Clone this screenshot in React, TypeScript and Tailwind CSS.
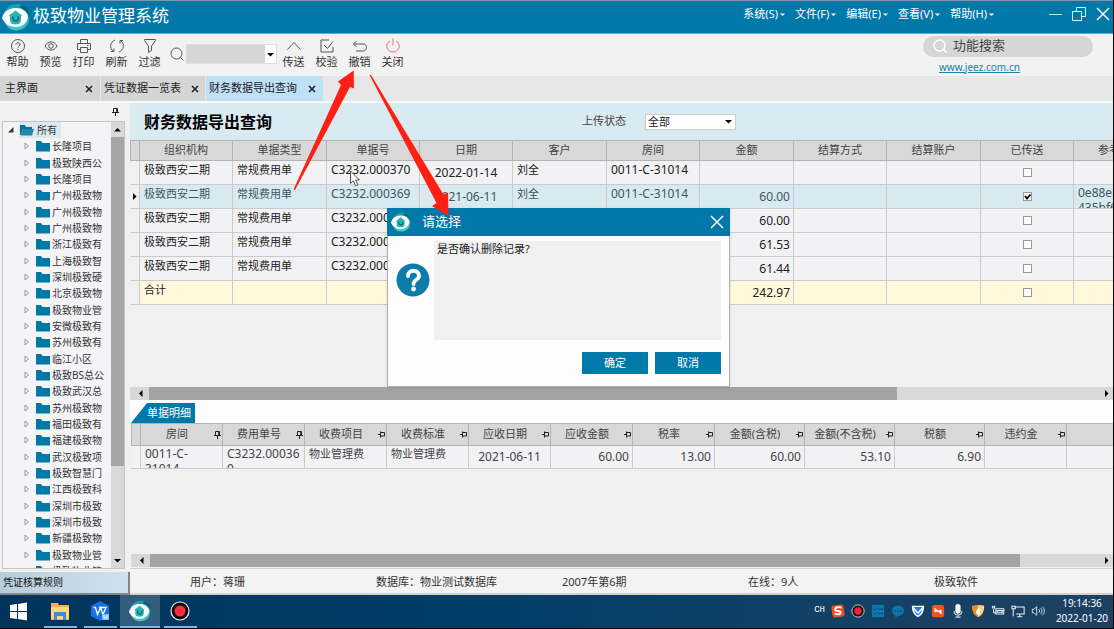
import React from "react";

type IconProps = { className?: string };

function LogoArt() {
  return (
    <>
      <path d="M2 12C3 3 12-1 20 2c6 3 9 10 7 16-1 5-5 8-9 9 4-3 6-7 5-12C21 8 9 4 2 12z" fill="#14a3b0" />
      <path d="M27 17c-2 8-11 13-19 9-3-2-5-5-6-9 5 5 10 7 16 6 4-1 7-3 9-6z" fill="#3cc9bf" />
      <path d="M20 2c5 2 8 7 7.500 13C26 9 23 6 17 4z" fill="#075b7c" />
      <path d="M0 15C2 7 9 5 14 5c6 0 10 3 12 8 0 7-6 11-12 11C7 24 2 20 0 15z" fill="#fff" />
      <path d="M13.500 7.500l6.500 5-1 1V17c0 3-2 4.500-5.500 4.500S8 20 8 17v-3.500l-1-1z" fill="#2bb5b0" />
      <path d="M11 14v1c0 4 5.500 4 5.500 0v-1" fill="none" stroke="#0a6f93" strokeWidth="1.600" strokeLinecap="round" />
    </>
  );
}

function Logo({ className }: IconProps) {
  return (
    <svg viewBox="0 0 28 28" className={className} aria-hidden="true">
      <LogoArt />
    </svg>
  );
}

function Folder({ open = false }: { open?: boolean }) {
  return (
    <svg viewBox="0 0 14 12" className="h-3 w-[14px] shrink-0" aria-hidden="true">
      {open ? (
        <>
          <path d="M0 1h5l1 2h6v2H3L1 11H0z" fill="#0a6f9c" />
          <path d="M3 5h11l-2 6.500H1z" fill="#2587ad" />
        </>
      ) : (
        <path d="M0 1h5l1.500 2H14v8.500H0z" fill="#0078a8" />
      )}
    </svg>
  );
}

function Pin({ side = false }: { side?: boolean }) {
  return (
    <svg viewBox="0 0 9 9" className="size-[9px] shrink-0" fill="none" stroke="#222" aria-hidden="true">
      {side ? (
        <path d="M1 4.500h2M3.500 1.500v6M3.500 2.500h4v3.500M3.500 6h4" />
      ) : (
        <path d="M2.500 5V1.500h4V5M5.700 1.500V5M1 5.500h7M4.500 5.500V9" />
      )}
    </svg>
  );
}

function Caret({ dir, className = "" }: { dir: "up" | "down" | "left" | "right"; className?: string }) {
  const d = {
    up: "M0 5.500L3.500 2 7 5.500z",
    down: "M0 2h7L3.500 5.500z",
    left: "M5.500 0v7L2 3.500z",
    right: "M2 0v7l3.500-3.500z",
  }[dir];
  return (
    <svg viewBox="0 0 7 7" className={`size-[7px] shrink-0 ${className}`} aria-hidden="true">
      <path d={d} fill="currentColor" />
    </svg>
  );
}

function Cross({ className }: IconProps) {
  return (
    <svg viewBox="0 0 14 14" className={className} fill="none" stroke="currentColor" strokeWidth="1.500" aria-hidden="true">
      <path d="M1 1l12 12M13 1L1 13" />
    </svg>
  );
}

function ToolIcon({ children, className = "" }: { children: React.ReactNode; className?: string }) {
  return (
    <svg viewBox="0 0 16 16" className={`size-4 ${className}`} fill="none" stroke="currentColor" aria-hidden="true">
      {children}
    </svg>
  );
}

const leftTools = [
  { label: "帮助", icon: <><circle cx="8" cy="8" r="6.500" /><path d="M6 6.500C6 4 10 4 10 6.300 10 8 8 7.800 8 9.500M8 10.800v1.200" /></> },
  { label: "预览", icon: <><path d="M2 8c3-5.500 9-5.500 12 0-3 5.500-9 5.500-12 0z" /><circle cx="8" cy="8" r="2.300" /></> },
  { label: "打印", icon: <><path d="M4.500 5V1.500h7V5M4 11.500H1.500V5.500h13v6H12M4.500 9.500h7v5h-7zM11 7.500h1.500" /></> },
  { label: "刷新", icon: <><path d="M6 2C1 4 0 10 4.500 13.500M2 13.500h3v-3M10 14c5-2 6-8 1.500-11.500M14 2.500h-3v3" /></> },
  { label: "过滤", icon: <path d="M2.500 1.500h11v1L9.500 8v4.500l-3 2V8l-4-5.500z" /> },
];

const rightTools = [
  { label: "传送", icon: <path d="M1.500 11.500L8 4.500l6.500 7" /> },
  { label: "校验", icon: <path d="M10 2H2v12h12V9M5 7l3.500 3.500L14 3.500" /> },
  { label: "撤销", icon: <path d="M4.500 3L1.500 6l3 3M1.500 6h10c4 0 4 7 0 7H4" /> },
  { label: "关闭", icon: <path d="M5 3C-1 6.500 2 14 8 14s9-7.500 3-11M8 .5v7" />, red: true },
];

function ToolButton({ label, icon, red = false }: { label: string; icon: React.ReactNode; red?: boolean }) {
  return (
    <button className="flex w-[33px] flex-col items-center text-[11px] leading-4 whitespace-nowrap text-[#333]">
      <ToolIcon className={red ? "text-[#ec6f74]" : "text-[#555]"}>{icon}</ToolIcon>
      <span>{label}</span>
    </button>
  );
}

const menus = ["系统(S)", "文件(F)", "编辑(E)", "查看(V)", "帮助(H)"];

const tree = [
  "长隆项目", "极致陕西公", "长隆项目", "广州极致物", "广州极致物", "广州极致物", "浙江极致有",
  "上海极致智", "深圳极致硬", "北京极致物", "极致物业管", "安微极致有", "苏州极致有", "临江小区",
  "极致BS总公", "极致武汉总", "苏州极致物", "福田极致有", "福建极致物", "武汉极致项", "极致智慧门",
  "江西极致科", "深圳市极致", "深圳市极致", "新疆极致物", "极致物业管", "极致物业管",
];

type Row = {
  org: string;
  type?: string;
  no?: string;
  date?: string;
  client?: string;
  room?: string;
  amount?: string;
  sent?: boolean;
  ref?: string;
};

const rows: Row[] = [
  { org: "极致西安二期", type: "常规费用单", no: "C3232.000370", date: "2022-01-14", client: "刘全", room: "0011-C-31014" },
  { org: "极致西安二期", type: "常规费用单", no: "C3232.000369", date: "2021-06-11", client: "刘全", room: "0011-C-31014", amount: "60.00", sent: true, ref: "0e88e8 435bf6" },
  { org: "极致西安二期", type: "常规费用单", no: "C3232.000", amount: "60.00" },
  { org: "极致西安二期", type: "常规费用单", no: "C3232.000", amount: "61.53" },
  { org: "极致西安二期", type: "常规费用单", no: "C3232.000", amount: "61.44" },
  { org: "合计", amount: "242.97" },
];

const columns = [
  { label: "组织机构", width: "w-[93px]" },
  { label: "单据类型", width: "w-[94px]" },
  { label: "单据号", width: "w-[93px]" },
  { label: "日期", width: "w-[93px]" },
  { label: "客户", width: "w-[94px]" },
  { label: "房间", width: "w-[93px]" },
  { label: "金额", width: "w-[94px]" },
  { label: "结算方式", width: "w-[93px]" },
  { label: "结算账户", width: "w-[94px]" },
  { label: "已传送", width: "w-[93px]" },
];

function Cell({ children, kind = "text" }: { children?: React.ReactNode; kind?: "text" | "code" | "date" | "num" | "box" }) {
  const inner = {
    text: "pt-px px-1 text-[11px] leading-4",
    code: "pt-px px-1 text-xs leading-4",
    date: "text-center text-xs leading-6",
    num: "px-[3px] text-right text-xs leading-6",
    box: "flex items-center justify-center",
  }[kind];
  return (
    <td className="border-r border-b border-[#cbcbcb] p-0">
      <div className={`h-[23px] overflow-hidden ${inner}`}>{children}</div>
    </td>
  );
}

function MainGrid() {
  return (
    <table className="w-[1037px] table-fixed border-separate border-spacing-0">
      <thead>
        <tr className="h-[21px] bg-[#d8d8d8] text-[11px] text-[#444]">
          <th aria-label="标记" className="w-[10px] border border-[#b4b4b4] p-0" />
          {columns.map((c) => (
            <th key={c.label} className={`border-y border-r border-[#b4b4b4] p-0 font-normal ${c.width}`}>{c.label}</th>
          ))}
          <th className="w-[93px] border-y border-[#b4b4b4] p-0 pl-[24px] text-left font-normal">参考</th>
        </tr>
      </thead>
      <tbody>
        {rows.map((r, i) => {
          const tone = r.sent ? "bg-[#d8eaf0] text-[#3f5560]" : i === 5 ? "bg-[#fff8da] text-[#222]" : "bg-[#f2f2f5] text-[#222]";
          return (
            <tr key={i} className={tone}>
              <td className="border-r border-b border-[#cbcbcb] bg-[#f0f0f0] p-0 text-black">
                {r.sent && <Caret dir="right" className="mx-auto" />}
              </td>
              <Cell>{r.org}</Cell>
              <Cell>{r.type}</Cell>
              <Cell kind="code">{r.no}</Cell>
              <Cell kind="date">{r.date}</Cell>
              <Cell>{r.client}</Cell>
              <Cell kind="code">{r.room}</Cell>
              <Cell kind="num">{r.amount}</Cell>
              <Cell />
              <Cell />
              <Cell kind="box">
                <label className="relative flex">
                  <input
                    type="checkbox"
                    aria-label="已传送"
                    defaultChecked={!!r.sent}
                    className="peer size-[9px] appearance-none border border-[#999] bg-white"
                  />
                  <svg viewBox="0 0 9 9" className="pointer-events-none absolute inset-0 hidden size-[9px] peer-checked:block" aria-hidden="true">
                    <path d="M2 4l2 2.500L7.500 2.500" fill="none" stroke="#000" strokeWidth="1.800" />
                  </svg>
                </label>
              </Cell>
              <td className="border-b border-[#cbcbcb] p-0">
                <div className="h-[23px] w-12 overflow-hidden px-1 text-xs leading-[15px]">{r.ref}</div>
              </td>
            </tr>
          );
        })}
      </tbody>
    </table>
  );
}

type Detail = { label: string; width: string; value?: string; align: "wrap" | "text" | "date" | "num"; up?: boolean };

const details: Detail[] = [
  { label: "房间", width: "w-[82px]", value: "0011-C-31014", align: "wrap", up: true },
  { label: "费用单号", width: "w-[82px]", value: "C3232.000369", align: "wrap", up: true },
  { label: "收费项目", width: "w-[82px]", value: "物业管理费", align: "text" },
  { label: "收费标准", width: "w-[82px]", value: "物业管理费", align: "text" },
  { label: "应收日期", width: "w-[82px]", value: "2021-06-11", align: "date" },
  { label: "应收金额", width: "w-[82px]", value: "60.00", align: "num" },
  { label: "税率", width: "w-[82px]", value: "13.00", align: "num" },
  { label: "金额(含税)", width: "w-[90px]", value: "60.00", align: "num" },
  { label: "金额(不含税)", width: "w-[90px]", value: "53.10", align: "num" },
  { label: "税额", width: "w-[90px]", value: "6.90", align: "num" },
  { label: "违约金", width: "w-[82px]", align: "text" },
];

const detailAlign = {
  wrap: "px-1 text-xs leading-[15px] wrap-anywhere",
  text: "px-1 text-[11px] leading-[15px]",
  date: "text-center text-xs leading-[22px]",
  num: "px-[3px] text-right text-xs leading-[22px]",
};

function DetailGrid() {
  return (
    <table className="w-[996px] table-fixed border-separate border-spacing-0 text-[#444]">
      <thead>
        <tr className="h-[23px] bg-[#d8d8d8] text-[11px]">
          <th aria-label="标记" className="w-[10px] border border-[#b4b4b4] p-0" />
          {details.map((d) => (
            <th key={d.label} className={`border-y border-r border-[#b4b4b4] p-0 font-normal ${d.width}`}>
              <div className="flex items-center">
                <span className="flex-1 whitespace-nowrap">{d.label}</span>
                <Pin side={!d.up} />
              </div>
            </th>
          ))}
          <th aria-label="空列" className="border-y border-[#b4b4b4] p-0" />
        </tr>
      </thead>
      <tbody>
        <tr className="bg-[#f2f2f5]">
          <td className="border-r border-b border-[#cbcbcb] p-0" />
          {details.map((d) => (
            <td key={d.label} className="border-r border-b border-[#cbcbcb] p-0">
              <div className={`h-[22px] overflow-hidden ${detailAlign[d.align]}`}>{d.value}</div>
            </td>
          ))}
          <td className="border-b border-[#cbcbcb] p-0" />
        </tr>
      </tbody>
    </table>
  );
}

function HScroll({ thumb }: { thumb: string }) {
  return (
    <div className="flex h-[13px] shrink-0 items-center bg-[#d8d8d8] pr-[3px] pl-[7px]">
      <Caret dir="left" />
      <div className="mr-[7px] ml-[5px] flex h-full flex-1">
        <div className={`h-full bg-[#a3a3a3] ${thumb}`} />
      </div>
      <Caret dir="right" />
    </div>
  );
}

function Sidebar() {
  return (
    <aside className="flex w-[130px] shrink-0 flex-col bg-[#f0f0f0]">
      <div className="flex h-[18px] shrink-0 items-center justify-end pr-[10px] pb-px">
        <Pin />
      </div>
      <div className="mr-[5px] ml-[2px] flex min-h-0 flex-1 border border-[#c4c4c4] bg-[#f4f4f7]">
        <ul className="min-w-0 flex-1 overflow-hidden text-[10px] leading-4 text-[#333]">
          <li className="flex h-4 items-center gap-[5px] pl-[5px]">
            <svg viewBox="0 0 6 6" className="size-[6px]" aria-hidden="true"><path d="M5.500 0v5.500H0z" fill="#333" /></svg>
            <span className="flex h-full items-center gap-[3px] bg-[#d8eaf0] pr-1 pl-px">
              <Folder open />
              所有
            </span>
          </li>
          {tree.map((name, i) => (
            <li key={i} className="flex h-4 items-center gap-[2px] pl-[21px] whitespace-nowrap nth-[3n]:h-[17px]">
              <svg viewBox="0 0 6 8" className="mr-1 h-2 w-[6px] shrink-0" fill="none" stroke="#999" aria-hidden="true">
                <path d="M1 1l3.500 3L1 7z" />
              </svg>
              <Folder />
              {name}
            </li>
          ))}
        </ul>
        <div className="flex w-[13px] shrink-0 flex-col items-center bg-[#d9d9d9]">
          <div className="flex h-[15px] w-full items-center justify-center"><Caret dir="up" /></div>
          <div className="flex w-full flex-1 flex-col">
            <div className="h-[79%] bg-[#a6a6a6]" />
          </div>
          <div className="flex h-[15px] w-full items-center justify-center"><Caret dir="down" /></div>
        </div>
      </div>
      <button className="mt-[3px] h-[23px] shrink-0 border-r-2 border-b-2 border-[#858585] bg-linear-to-r from-[#b7cddb] to-[#cfe1ec] pl-[3px] text-left text-[10px] text-[#111]">
        凭证核算规则
      </button>
    </aside>
  );
}

function Dialog() {
  return (
    <div role="dialog" aria-label="请选择" className="absolute top-[208px] left-[387px] flex w-[343px] flex-col border border-[#b0b0b0] bg-[#fdfdfd] shadow-sm">
      <div className="-mx-px -mt-px flex h-7 items-center bg-[#0078a8] pr-[6px] pl-1 text-white">
        <Logo className="size-5" />
        <h2 className="ml-[11px] flex-1 text-[13px]">请选择</h2>
        <button aria-label="关闭对话框"><Cross className="size-[14px]" /></button>
      </div>
      <div className="flex h-[104px] pt-[5px] pr-2 pl-2">
        <svg viewBox="0 0 34 34" className="mt-[22px] size-[34px] shrink-0" aria-hidden="true">
          <circle cx="17" cy="17" r="16.500" fill="#0d7caa" />
          <path d="M12 13c0-7 11-7 11 0 0 4-5.500 3.500-5.500 8" fill="none" stroke="#fff" strokeWidth="3.800" strokeLinecap="round" />
          <circle cx="17.500" cy="26" r="2.400" fill="#fff" />
        </svg>
        <p className="ml-1 flex-1 bg-[#f0f0f0] px-[3px] text-[11px] leading-4 text-[#222]">是否确认删除记录?</p>
      </div>
      <div className="flex justify-end gap-[7px] pt-3 pr-2 pb-3 text-[11px] text-white">
        <button className="h-[22px] w-[66px] bg-[#0078a8]">确定</button>
        <button className="h-[22px] w-[66px] bg-[#0078a8]">取消</button>
      </div>
    </div>
  );
}

function Annotations() {
  return (
    <svg viewBox="285 64 175 158" className="pointer-events-none absolute top-16 left-[285px] h-[158px] w-[175px]" aria-hidden="true">
      <path d="M293.500 189.500L341 85 338 81.500 353.700 70.500 354 88.500 350 87 295 190z" fill="#fe2014" />
      <path d="M369.500 75L436.500 203 432 206 448.500 216 448 192.500 443.500 194.500 371 75z" fill="#fe2014" />
      <path d="M350.500 171v12.500l2.800-2.600 2.400 5 2.200-1-2.300-4.900h3.900z" fill="#f6f6f6" stroke="#444" strokeWidth=".9" />
    </svg>
  );
}

function TaskButton({ label, children, active = false, running = true }: { label: string; children: React.ReactNode; active?: boolean; running?: boolean }) {
  return (
    <button
      aria-label={label}
      className={`flex w-10 flex-col items-center justify-between pt-[5px] ${active ? "bg-[#325d7c]" : ""}`}
    >
      <svg viewBox="0 0 22 22" className="size-[22px]" aria-hidden="true">{children}</svg>
      <span className={`h-[2px] ${active ? "w-full" : "w-[33px]"} ${running ? "bg-[#76b9ed]" : ""}`} />
    </button>
  );
}

const tray: { label: string; art: React.ReactNode }[] = [
  { label: "搜狗输入法", art: <><rect x="1" y="1" width="14" height="14" rx="3" fill="#f04a23" transform="rotate(-8 8 8)" /><path d="M12 4C7 3 4 4 5 7c1 2 6 0 6 3 0 2-3 2-7 1" fill="none" stroke="#fff" strokeWidth="2.200" /></> },
  { label: "录屏", art: <><circle cx="8" cy="8" r="7" fill="#111" stroke="#ddd" /><circle cx="8" cy="8" r="4.200" fill="#f3233a" /></> },
  { label: "任务", art: <><rect x="1" y="1" width="14" height="14" fill="#0c76ae" /><path d="M3 6l1 1 2-2M8 6h6M3 11l1 1 2-2M8 11h6" fill="none" stroke="#0b3d63" /></> },
  { label: "消息", art: <><path d="M8 2c9 0 9 11 1 11l-4 2v-2C-1 11 0 2 8 2z" fill="#0c76ae" /><path d="M4 8h1.500M7.300 8h1.500M10.500 8H12" stroke="#0b3d63" strokeWidth="1.500" /></> },
  { label: "电脑管家", art: <><path d="M1 2h14c0 6-2 11-7 13C3 13 1 8 1 2z" fill="#fff" /><path d="M3 3.500h10L8 9zM3 6.500l5 5 5-5c-1 3-2.500 5.500-5 6.500-2.500-1-4-3.500-5-6.500z" fill="#1f7fe0" /></> },
  { label: "远程协助", art: <><rect x="1" y="1" width="14" height="14" rx="2.500" fill="#f4511e" /><path d="M4 4l4 3.500 4-1V12L8 8.500 4 9.500z" fill="#fff" /></> },
  { label: "麦克风", art: <><rect x="5" y="0" width="6" height="11" rx="3" fill="#f4f4f4" /><path d="M3.500 8c0 6 9 6 9 0M8 12.500V15M5 15h6" fill="none" stroke="#ddd" strokeWidth="1.200" /></> },
  { label: "安全防护", art: <><path d="M1 2l7-1 7 1c0 6-2 11-7 13C3 13 1 8 1 2z" fill="#f58a1f" /><path d="M8 1l7 1c0 6-2 11-7 13z" fill="#ffd28a" /><path d="M9 4c-5 5-3 8-1 8 3 0 3-3 1-8z" fill="#fff" /></> },
  { label: "电源", art: <path d="M5.500 5.500h9v6h-9zM14.500 7.500h1M1 3.500h4M2 2v3M4 2v3M3 5v5h2M7 7.500h6v2H7z" fill="none" stroke="#e8eef3" strokeWidth="1.200" /> },
  { label: "网络", art: <path d="M4 3.500h11v8H6M10 11.500v3M7 14.500h6M1 2.500h4v3H1zM2.500 6v8" fill="none" stroke="#e8eef3" strokeWidth="1.200" /> },
  { label: "音量", art: <path d="M1.500 6h2l3-3v10l-3-3h-2zM9 6c1 1 1 3 0 4M11 4.500c2 2 2 5 0 7M13 3c3 3 3 7 0 10" fill="none" stroke="#e8eef3" /> },
];

function Taskbar() {
  return (
    <footer className="flex h-[34px] shrink-0 border-b border-black bg-linear-to-r from-[#00345a] via-[#003f69] via-45% to-[#1d4162] text-white">
      <TaskButton label="开始" running={false}>
        <path d="M1 5l7-1v7H1zM9 4l9-1.500V11H9zM1 12h7v7l-7-1zM9 12h9v8.500L9 19z" fill="#fff" />
      </TaskButton>
      <TaskButton label="文件资源管理器">
        <path d="M2 3h7l1 2h10v15H2z" fill="#f0b43c" />
        <path d="M2 7h18v12H2z" fill="#ffd777" />
        <path d="M5 20v-8h12v8h-3v-4H8v4z" fill="#3494d3" />
      </TaskButton>
      <TaskButton label="WPS">
        <path d="M11 1l9 5v10l-9 5-9-5V6z" fill="#1674de" />
        <path d="M4.500 7.500h2l2 7 3-7 2.500 7 3-7H10" fill="none" stroke="#fff" strokeWidth="1.300" />
        <path d="M13 14h7v6h-7z" fill="#7db7fb" />
        <path d="M15 15v3h3v-3" fill="none" stroke="#fff" />
      </TaskButton>
      <TaskButton label="极致物业管理系统" active>
        <g transform="scale(.78)"><LogoArt /></g>
      </TaskButton>
      <TaskButton label="录屏软件">
        <circle cx="11" cy="11" r="9" fill="#0a0a0a" stroke="#eee" strokeWidth="1.200" />
        <circle cx="11" cy="11" r="5.500" fill="#fb2a3d" />
      </TaskButton>
      <div className="ml-auto flex items-center gap-[6px] pb-[2px]">
        <span className="font-['Liberation_Mono',monospace] text-[9px]">CH</span>
        <ul className="flex items-center gap-[6px]">
          {tray.map((t) => (
            <li key={t.label}>
              <svg viewBox="0 0 16 16" role="img" aria-label={t.label} className="size-[14px]">{t.art}</svg>
            </li>
          ))}
        </ul>
        <time className="flex w-[62px] flex-col items-center text-[10px] leading-[15px]">
          <span>19:14:36</span>
          <span>2022-01-20</span>
        </time>
      </div>
    </footer>
  );
}

const tabs = [
  { label: "主界面", box: "w-[100px] bg-[#d5d5d5] pr-[7px] pl-[5px]" },
  { label: "凭证数据一览表", box: "w-[104px] bg-[#d5d5d5] pr-[6px] pl-[3px]" },
  { label: "财务数据导出查询", box: "w-[117px] bg-[#c0e0f8] pr-[7px] pl-[3px]" },
];

const status = ["用户：蒋珊", "数据库：物业测试数据库", "2007年第6期", "在线：9人", "极致软件"];

export default function App() {
  return (
    <div className="relative flex h-screen flex-col overflow-hidden border-r border-black bg-[#f0f0f0] font-['Noto_Sans','Noto_Sans_CJK_SC',sans-serif] text-[11px]">
      <header className="flex h-[34px] shrink-0 items-center border-t border-b border-t-[#7c9aa8] border-b-[#5fb0d0] bg-[#0078a8] pl-[2px] text-white">
        <Logo className="size-7" />
        <h1 className="mb-[2px] ml-[3px] flex-1 text-[17px] leading-6">极致物业管理系统</h1>
        <nav className="mb-[6px] flex gap-[9px]">
          {menus.map((m) => (
            <button key={m} className="flex items-center gap-px whitespace-nowrap">
              {m}
              <Caret dir="down" className="scale-75" />
            </button>
          ))}
        </nav>
        <div className="mb-[6px] ml-[54px] flex items-center gap-[10px] pr-[3px]">
          <button aria-label="最小化" className="h-px w-[13px] bg-[#cfe6ef]" />
          <button aria-label="还原">
            <svg viewBox="0 0 14 14" className="size-[14px]" fill="none" stroke="#e3f1f6" aria-hidden="true">
              <path d="M.5 4.500h9v9h-9zM4.500 4V.5h9v9H10" />
            </svg>
          </button>
          <button aria-label="关闭窗口"><Cross className="size-[14px]" /></button>
        </div>
      </header>

      <div className="flex h-[42px] shrink-0 items-center bg-[#f2f2f2] pb-[2px] pl-px">
        {leftTools.map((t) => <ToolButton key={t.label} {...t} />)}
        <svg viewBox="0 0 14 14" className="ml-1 size-[14px] shrink-0" fill="none" stroke="#555" aria-hidden="true">
          <circle cx="6.500" cy="6.500" r="5.500" /><path d="M10.500 10.500l3 3" />
        </svg>
        <label className="relative ml-[2px] flex h-5 w-[91px] border border-[#dedede] bg-white">
          <input aria-label="快速查找" className="h-full w-[78px] bg-[#d6d6d6] px-1 outline-none" />
          <Caret dir="down" className="m-auto" />
        </label>
        {rightTools.map((t) => <ToolButton key={t.label} {...t} />)}
        <div className="mr-5 ml-auto flex w-[170px] flex-col gap-[2px] pt-[2px]">
          <label className="flex h-[21px] items-center gap-[6px] rounded-full bg-[#d6d6d6] pl-[10px]">
            <svg viewBox="0 0 14 14" className="size-[14px] shrink-0" fill="none" stroke="#fff" strokeWidth="1.400" aria-hidden="true">
              <circle cx="6.500" cy="6.500" r="5.500" /><path d="M10.500 10.500l3 3" />
            </svg>
            <input aria-label="功能搜索" placeholder="功能搜索" className="w-full bg-transparent text-[13px] outline-none placeholder:text-[#444]" />
          </label>
          <a href="http://www.jeez.com.cn" className="pl-4 text-[10px] leading-4 text-[#167fab] underline">www.jeez.com.cn</a>
        </div>
      </div>

      <div className="flex h-[25px] shrink-0 gap-px bg-[#e7e7e7]">
        {tabs.map((t) => (
          <div key={t.label} className={`flex items-center justify-between whitespace-nowrap text-[#222] ${t.box}`}>
            <button>{t.label}</button>
            <button aria-label={`关闭${t.label}`}>
              <svg viewBox="0 0 8 8" className="size-2" stroke="#222" strokeWidth="1.600" aria-hidden="true"><path d="M1 1l6 6M7 1L1 7" /></svg>
            </button>
          </div>
        ))}
      </div>

      <div className="flex min-h-0 flex-1 border-t-2 border-[#fafafa]">
        <Sidebar />
        <main className="flex min-w-0 flex-1 flex-col">
          <div className="flex h-[37px] shrink-0 items-center bg-[#d9eaf1] pl-[14px]">
            <h2 className="w-[438px] text-base font-bold text-black">财务数据导出查询</h2>
            <label htmlFor="upload-state" className="w-[63px] text-[#444]">上传状态</label>
            <span className="relative flex w-[91px] items-center">
              <select id="upload-state" className="h-4 w-full appearance-none border border-[#ccc] bg-white px-[2px] text-[11px] leading-[14px] text-[#222]">
                <option>全部</option>
              </select>
              <Caret dir="down" className="pointer-events-none absolute right-1" />
            </span>
          </div>
          <div className="min-h-0 flex-1 overflow-hidden"><MainGrid /></div>
          <HScroll thumb="w-[79%]" />
          <div className="flex h-[23px] shrink-0 items-end bg-[#fdfdfd] pl-px">
            <button className="h-5 w-16 bg-[#0078a8] pl-4 text-left whitespace-nowrap text-white [clip-path:polygon(16px_0,100%_0,100%_100%,0_100%)]">
              单据明细
            </button>
          </div>
          <div className="h-[131px] shrink-0 overflow-hidden pl-px"><DetailGrid /></div>
          <div className="pl-px"><HScroll thumb="w-[92%]" /></div>
          <div className="mt-px flex h-[27px] shrink-0 items-center overflow-hidden border-t border-b-2 border-t-[#cfcfcf] border-b-[#d6d2ca] bg-[#f3f3f3] pt-[2px] pl-[60px] text-[#333]">
            {status.map((s) => <span key={s} className="w-[186px] shrink-0 whitespace-nowrap">{s}</span>)}
          </div>
        </main>
      </div>

      <Taskbar />
      <Dialog />
      <Annotations />
    </div>
  );
}
